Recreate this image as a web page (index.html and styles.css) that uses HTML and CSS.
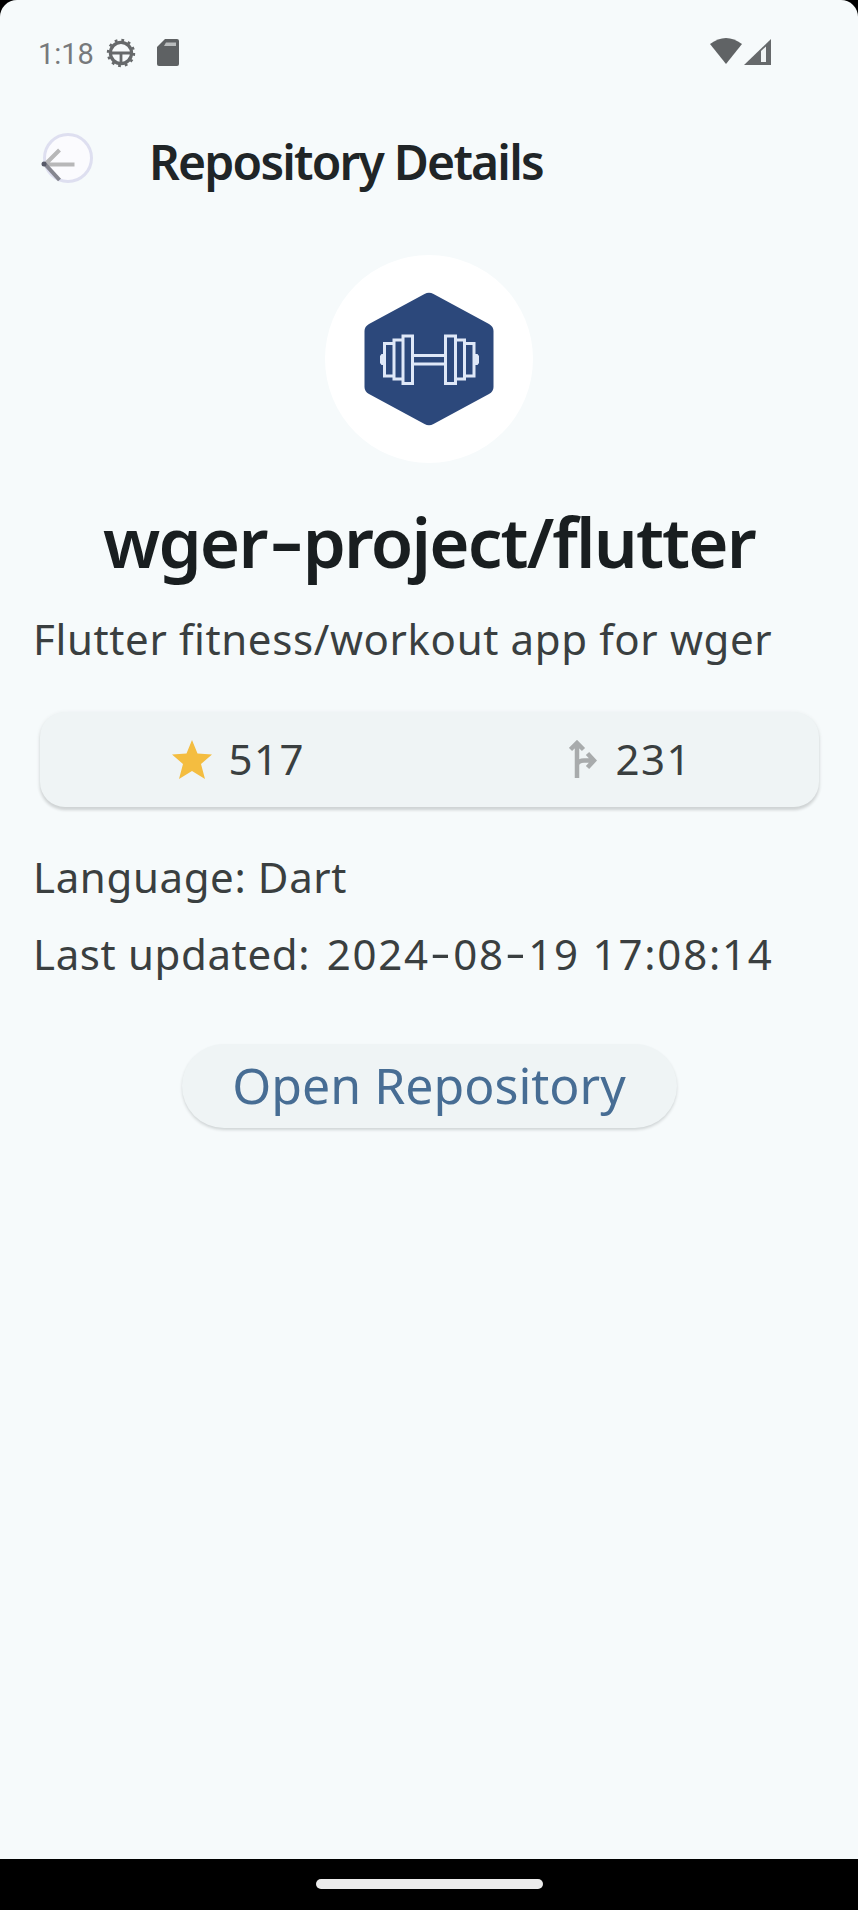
FILE: index.html
```html
<!DOCTYPE html>
<html lang="en">
<head>
<meta charset="utf-8">
<title>Repository Details</title>
<link rel="stylesheet" href="styles.css">
</head>
<body>
<div class="device">
  <div class="screen">
    <header class="status">
      <span class="clock">1:18</span>
      <svg class="debug-icon" viewBox="0 0 30 30" fill="none" stroke="#66696b">
        <circle cx="15" cy="15" r="10.600" stroke-width="3.200"/>
        <circle cx="15" cy="15" r="13" stroke-width="2.400" stroke-dasharray="2.800 4.007"/>
        <path d="M4 15h22M15 15v11" stroke-width="2.800"/>
      </svg>
      <svg class="sd-icon" viewBox="0 0 22 27">
        <path d="M8 0H20a2 2 0 0 1 2 2V25a2 2 0 0 1-2 2H2a2 2 0 0 1-2-2V8z" fill="#5e6163"/>
        <path d="M9 3.500H19V7H7z" fill="#b9bcbd"/>
      </svg>
      <svg class="wifi-icon" viewBox="0 0 32 26"><path d="M0 6Q16-6 32 6L16 26z" fill="#606365"/></svg>
      <svg class="signal-icon" viewBox="0 0 27 26"><path d="M27 0V26H0z" fill="#66696b"/><path d="M17 12l5-4.500V23H17z" fill="#f0f3f4"/></svg>
    </header>
    <nav class="appbar">
      <svg class="back" viewBox="0 0 56 56">
        <circle cx="29" cy="29" r="23.500" fill="#fbfbfe" stroke="#dedff0" stroke-width="3"/>
        <path d="M6 35.500H35.500M6 35.500L20.500 21" fill="none" stroke="#b7b7b8" stroke-width="4"/>
        <path d="M5 34L20.500 51" fill="none" stroke="#85868f" stroke-width="4"/>
        <circle cx="5" cy="35" r="2.500" fill="#575a68"/>
      </svg>
      <h1 class="title">Repository Details</h1>
    </nav>
    <main class="content">
      <div class="avatar">
        <svg class="logo" viewBox="0 0 130 134">
          <path d="M60.500 2Q65-.5 69.500 2L125 32Q129.500 34.500 129.500 39V95Q129.500 99.500 125 102L69.500 132Q65 134.500 60.500 132L5 102Q.5 99.500 .5 95V39Q.5 34.500 5 32z" fill="#2c487b"/>
          <g fill="none" stroke="#dfe8f8" stroke-width="3">
            <path d="M49.500 63.500H81M49.500 72H81"/>
            <path d="M39 44H48.500V91.500H39zM30 48H39V87H30zM20.500 51.500H30V84H20.500zM81.500 44H91.500V91.500H81.500zM91.500 48H100.500V87H91.500zM100.500 51.500H110V84H100.500z"/>
          </g>
          <path d="M20 62h-2.500l-1.500 2v7l1.500 2h2.500zM111 62h2.500l1.500 2v7l-1.500 2h-2.500z" fill="#dfe8f8"/>
        </svg>
      </div>
      <h2 class="name">wger<span class="hyphen">-</span>project/flutter</h2>
      <p class="desc">Flutter fitness/workout app for wger</p>
      <section class="stats">
        <div class="stat stars">
          <svg class="star" viewBox="0 0 40 39"><path d="M20 0L25.500 13.500L40 14.500L29 24L33 39L20 31L7 39L11 24L0 14.500L14.500 13.500z" fill="#f4bd40"/></svg>
          <span>517</span>
        </div>
        <div class="stat forks">
          <svg class="fork" viewBox="0 0 28 38" fill="none" stroke="#a8abac" stroke-width="4.500"><path d="M8 38V3M1.500 9.500L8 3L14.500 9.500M8 24Q10 20.500 15 20.500H25M18.500 13.500L25 20.500L18.500 27.500"/></svg>
          <span>231</span>
        </div>
      </section>
      <p class="lang">Language: Dart</p>
      <p class="updated">Last updated: <span class="date">2024<span class="hyphen">-</span>08<span class="hyphen">-</span>19 17:08:14</span></p>
      <button class="open">Open Repository</button>
    </main>
  </div>
  <footer class="navbar"><div class="pill"></div></footer>
</div>
</body>
</html>
```
FILE: styles.css
```css
* { box-sizing: border-box; margin: 0; padding: 0; }
body { background: #000; font-family: "Noto Sans", "Open Sans", sans-serif; color: #3a3f40; }
svg { display: block; flex: none; }
.device { width: 858px; height: 1910px; display: flex; flex-direction: column; overflow: hidden; }
.screen { flex: 1; background: #f6fafb; border-radius: 17px 17px 0 0; }
.status { height: 108px; padding: 0 87px 0 38px; display: flex; align-items: center; }
.clock { font: 29px/40px Roboto, sans-serif; color: #77797b; width: 68px; }
.debug-icon { width: 30px; height: 30px; margin-top: -3px; }
.sd-icon { width: 22px; height: 27px; margin: -3px auto 0 21px; }
.wifi-icon { width: 32px; height: 26px; margin-top: -6px; }
.signal-icon { width: 27px; height: 26px; margin: -4px 0 0 2px; }
.appbar { height: 104px; padding-left: 39px; display: flex; align-items: center; }
.back { width: 56px; height: 56px; margin-top: -7px; }
.title { margin: 3px 0 0 54px; font-size: 48px; line-height: 60px; font-weight: 600; color: #202527; white-space: nowrap; letter-spacing: -1.8px; }
.content { padding: 43px 33px 0; display: flex; flex-direction: column; align-items: center; white-space: nowrap; }
.avatar { width: 208px; height: 208px; border-radius: 50%; background: #fff; display: grid; place-items: center; }
.logo { width: 130px; height: 134px; }
.hyphen { display: inline-block; transform: translateY(-2px) scaleX(1.5); }
.name { margin-top: 38px; font-size: 69px; line-height: 80px; font-weight: 600; color: #191e20; letter-spacing: -1.85px; }
.name .hyphen { padding: 0 5px; margin: 0 3px; }
.desc, .lang, .updated { align-self: stretch; font-size: 42px; line-height: 60px; letter-spacing: 0.63px; }
.desc { margin-top: 28px; }
.stats { width: 779px; height: 95px; margin-top: 43px; padding-bottom: 1px; background: #eff4f5; border-radius: 25px; box-shadow: 0 3px 3px #cfd3d4, 0 1px 4px #e4e8e9; display: grid; grid-template-columns: 1fr 1fr; align-items: center; }
.stat { display: flex; align-items: center; justify-content: center; font-size: 42px; line-height: 60px; letter-spacing: 1.5px; }
.stars { padding-left: 9px; }
.forks { padding-left: 14px; }
.star { width: 40px; height: 39px; margin-right: 16px; }
.fork { width: 28px; height: 38px; margin-right: 18px; }
.lang { margin-top: 40px; }
.updated { margin-top: 17px; }
.date { letter-spacing: 1.8px; margin-left: 5px; }
.date .hyphen { padding: 0 4px; }
.open { margin-top: 60px; width: 495px; height: 84px; padding-bottom: 3px; border: 0; border-radius: 42px; background: #eff4f5; box-shadow: 0 2px 3px #d0d5d6; font: 50px/70px "Noto Sans", "Open Sans", sans-serif; color: #476d94; }
.navbar { height: 51px; background: #000; display: flex; justify-content: center; padding-top: 20px; }
.pill { width: 227px; height: 10px; border-radius: 5px; background: #ececec; }
```
